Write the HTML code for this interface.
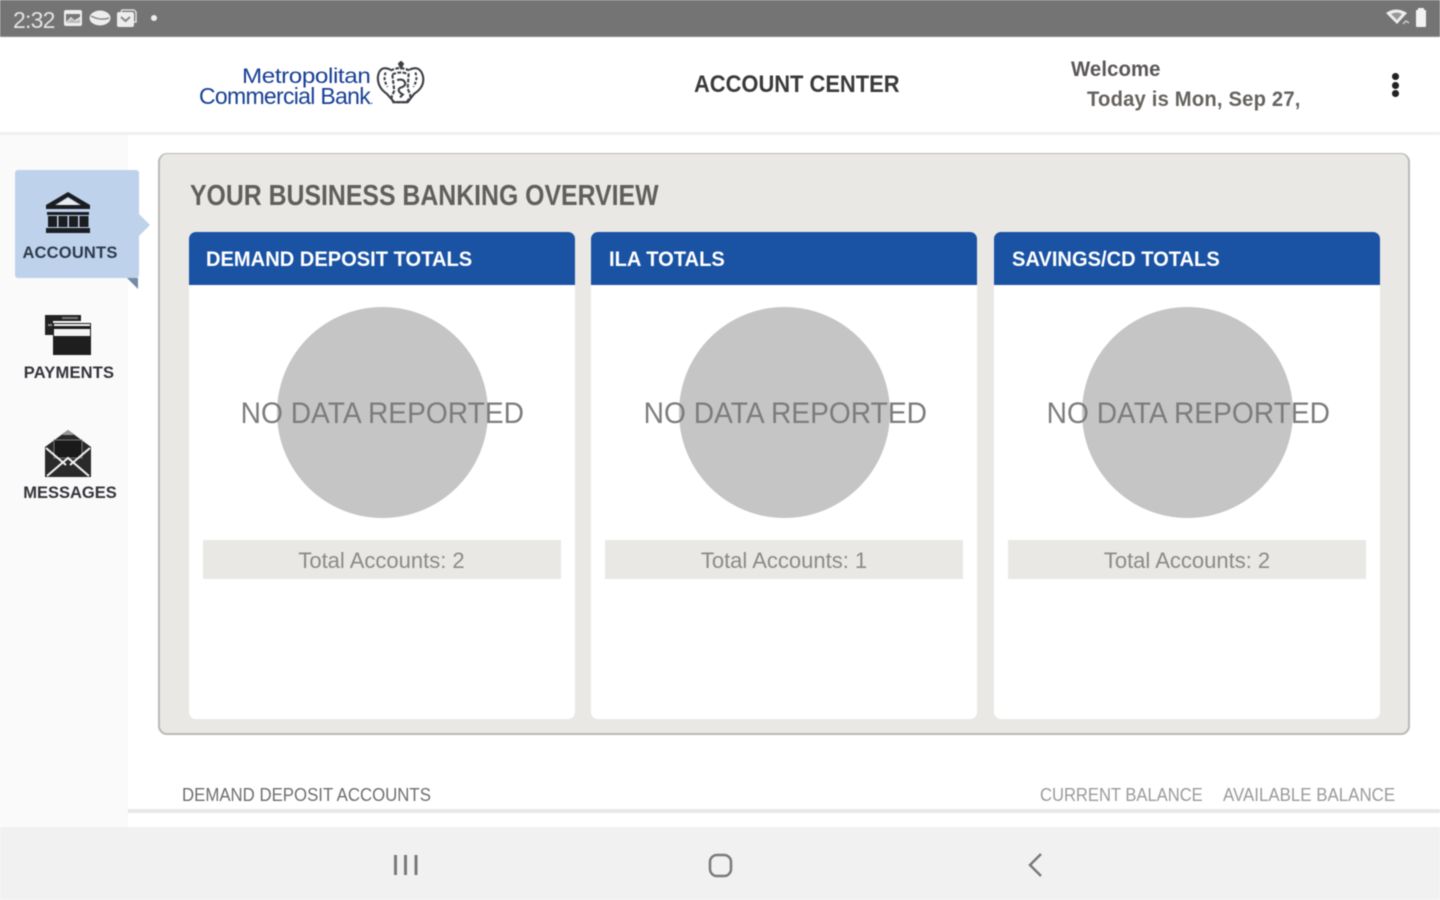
<!DOCTYPE html>
<html><head><meta charset="utf-8"><style>
*{box-sizing:border-box}
html,body{margin:0;padding:0}
body{width:1440px;height:900px;position:relative;overflow:hidden;background:#fff;font-family:"Liberation Sans",sans-serif;filter:blur(.6px)}
.a{position:absolute;white-space:nowrap}
.card{position:absolute;top:232px;width:386px;height:487px;background:#fff;border-radius:7px;overflow:hidden}
.hd{position:absolute;left:0;top:0;width:100%;height:53px;background:#1a53a3;color:#fff;font-weight:700;font-size:21.5px;line-height:54px;padding-left:17.5px}
.hd span{display:inline-block;transform:scaleX(.935);transform-origin:0 50%}
.cir{position:absolute;left:88px;top:75px;width:211px;height:211px;border-radius:50%;background:#c5c5c5}
.nd{position:absolute;left:0;width:100%;top:164px;text-align:center;font-size:29.5px;line-height:36px;color:#7c7c7c;white-space:nowrap}
.nd span{display:inline-block;transform:scaleX(.955) translateX(1px)}
.tot{position:absolute;left:14px;top:308px;width:358px;height:39px;background:#eae8e5;text-align:center;font-size:22px;line-height:41px;color:#8a8a8a}
.nav{font-weight:700;font-size:16.5px;color:#30343a;text-align:center;width:110px}
</style></head><body>
<div class="a" style="left:0;top:0;width:1440px;height:37px;background:#747474;border-bottom:1px solid #8a8a8a"></div>
<div class="a" style="left:13px;top:7px;font-size:23px;line-height:26px;color:#e4e4e4;letter-spacing:-.8px">2:32</div>
<svg class="a" style="left:62px;top:8px" width="100" height="21" viewBox="0 0 100 21">
<rect x="2" y="2" width="18" height="16" rx="2" fill="#ededed"/><path d="M4 14l5-5 4 3 5-3v-3H4z" fill="#777"/><path d="M4 15l6-5 4 3 4-2v4H4z" fill="#bbb"/>
<ellipse cx="38" cy="10" rx="10.500" ry="7.500" fill="#ededed"/><path d="M29 8q9 5 18 2" stroke="#888" fill="none" stroke-width="1.500"/>
<rect x="55" y="4" width="17" height="15" rx="2" fill="#ededed"/><path d="M59 4l1-2h12l2 2v10h-2" stroke="#ddd" fill="none" stroke-width="1.500"/><path d="M59 9l4.500 4 4.500-4" stroke="#888" fill="none" stroke-width="2"/>
<circle cx="92" cy="10" r="3" fill="#eee"/></svg>
<svg class="a" style="left:1384px;top:6px" width="50" height="24" viewBox="0 0 50 24">
<path d="M2 7q10-7 21 0l-10 11z" fill="#eee"/><path d="M7 8q6-3 11 0l-5 6z" fill="#999"/><path d="M19 18l3-3 3 2" stroke="#ccc" fill="none" stroke-width="1.500"/>
<path d="M32 4h2V2h6v2h2v16q0 1-1 1h-8q-1 0-1-1z" fill="#f2f2f2"/></svg>

<div class="a" style="left:0;top:37px;width:1440px;height:96px;background:#fff"></div>
<div class="a" style="left:0;top:132px;width:1440px;height:3px;background:#f0f0ef"></div>
<div class="a" style="left:242px;top:65px;font-size:21.500px;line-height:22px;color:#173f94;letter-spacing:-.35px;transform:scaleX(1.125);transform-origin:0 0">Metropolitan</div>
<div class="a" style="left:199px;top:85px;font-size:23px;line-height:23px;color:#173f94;letter-spacing:-.7px">Commercial Bank<span style="font-size:12px">.</span></div>
<svg class="a" style="left:374px;top:61px" width="52" height="46" viewBox="0 0 54 48" fill="none" stroke="#3c4045" stroke-width="2.200">
<path d="M17 9Q6 4 4 16q-1 11 9 18l8 9h14l7-9q11-7 9-18Q48 4 37 9"/><path d="M26 3l2-2 2 2-2 4z" fill="#45494d"/>
<path d="M17 10q10-5 20 0M19 14q9-4 17 0l-1 15q2 4 3 8l-4 6H20l-2-5 3-7z" stroke-dasharray="4 1.500"/><path d="M24 20q6-2 8 2t-5 6q-4 3 3 7l-3 3"/><path d="M12 12q-3 7 2 15M43 12q3 7-2 15" stroke-dasharray="3 2"/></svg>

<div class="a" style="left:694px;top:70px;font-size:24px;line-height:30px;font-weight:700;color:#3a3a3a;transform:scaleX(.912);transform-origin:0 0">ACCOUNT CENTER</div>
<div class="a" style="left:1071px;top:56px;font-size:21px;line-height:28px;font-weight:700;color:#5b5757;letter-spacing:.1px;transform:scaleX(.968);transform-origin:0 0">Welcome</div>
<div class="a" style="left:1087px;top:86px;font-size:21px;line-height:28px;font-weight:700;color:#66635f;letter-spacing:.2px;transform:scaleX(.962);transform-origin:0 0">Today is Mon, Sep 27,</div>
<div class="a" style="left:1392px;top:73px;width:6.500px;height:6.500px;border-radius:50%;background:#222"></div>
<div class="a" style="left:1392px;top:82px;width:6.500px;height:6.500px;border-radius:50%;background:#222"></div>
<div class="a" style="left:1392px;top:90px;width:6.500px;height:6.500px;border-radius:50%;background:#222"></div>

<div class="a" style="left:0;top:135px;width:128px;height:692px;background:#fafafa"></div>
<div class="a" style="left:15px;top:170px;width:124px;height:108px;background:#bed2ec;border-radius:3px"></div>
<div class="a" style="left:139px;top:214px;width:0;height:0;border-left:11px solid #bed2ec;border-top:11px solid transparent;border-bottom:11px solid transparent"></div>
<div class="a" style="left:127px;top:278px;width:0;height:0;border-right:11px solid #758aa6;border-bottom:11px solid transparent"></div>

<svg class="a" style="left:44px;top:191px" width="48" height="46" viewBox="0 0 48 46" fill="#1b1d20">
<path d="M24 1L2 14v4h44v-4zM24 6l13 8H11z" fill-rule="evenodd"/><path d="M24 7l11 7H13z" fill="#e9edf2"/>
<path d="M3 21h42v3H3zM4 25h9v11H4zM14.500 25h9v11h-9zM25 25h9v11h-9zM35.500 25h9v11h-9z"/><path d="M2 37h44v5H2z"/></svg>
<div class="a nav" style="left:15px;top:242.500px;line-height:20px;color:#2c3a4b;letter-spacing:.2px">ACCOUNTS</div>

<svg class="a" style="left:44px;top:313px" width="48" height="44" viewBox="0 0 48 44">
<path d="M1 2h36v6H9v14H1z" fill="#222"/><path d="M4 11h4v2H4z" fill="#888"/><path d="M18 4h16v2H18z" fill="#777"/>
<path d="M9 10h38v32H9z" fill="#1e1e1e"/><path d="M10 16h36v7H10zM10 11h36v2H10z" fill="#f4f4f4"/></svg>
<div class="a nav" style="left:14px;top:362.500px;line-height:20px;color:#33343a;letter-spacing:.2px">PAYMENTS</div>

<svg class="a" style="left:44px;top:429px" width="48" height="50" viewBox="0 0 48 50">
<path d="M24 1L1 18v30h46V18z" fill="#2a2a2a"/><path d="M10 11h28v18H10z" fill="#1a1a1a" stroke="#777" stroke-width="1"/><path d="M24 1L18 6h12z" fill="#999"/>
<path d="M2 19l20 17M46 19L26 36M3 47l21-18 21 18" stroke="#f2f2f2" stroke-width="2" fill="none"/></svg>
<div class="a nav" style="left:15px;top:482.500px;line-height:20px;color:#33343a">MESSAGES</div>

<div class="a" style="left:158px;top:153px;width:1252px;height:582px;background:#eae8e5;border:2px solid #bab9b6;border-radius:9px;border-top-width:1.500px"></div>
<div class="a" style="left:190px;top:179px;font-size:28.500px;line-height:34px;font-weight:700;color:#5f5f5d;transform:scaleX(.871);transform-origin:0 0">YOUR BUSINESS BANKING OVERVIEW</div>

<div class="card" style="left:188.500px"><div class="hd"><span>DEMAND DEPOSIT TOTALS</span></div><div class="cir"></div><div class="nd"><span>NO DATA REPORTED</span></div><div class="tot">Total Accounts: 2</div></div>
<div class="card" style="left:591px"><div class="hd"><span>ILA TOTALS</span></div><div class="cir"></div><div class="nd"><span>NO DATA REPORTED</span></div><div class="tot">Total Accounts: 1</div></div>
<div class="card" style="left:994px"><div class="hd"><span>SAVINGS/CD TOTALS</span></div><div class="cir"></div><div class="nd"><span>NO DATA REPORTED</span></div><div class="tot">Total Accounts: 2</div></div>

<div class="a" style="left:182px;top:784px;font-size:18.500px;line-height:22px;color:#6e6e6e;transform:scaleX(.908);transform-origin:0 0">DEMAND DEPOSIT ACCOUNTS</div>
<div class="a" style="left:1040px;top:784px;font-size:18.500px;line-height:22px;color:#9a9a9a;transform:scaleX(.896);transform-origin:0 0">CURRENT BALANCE</div>
<div class="a" style="left:1223px;top:784px;font-size:18.500px;line-height:22px;color:#9a9a9a;transform:scaleX(.913);transform-origin:0 0">AVAILABLE BALANCE</div>
<div class="a" style="left:128px;top:809px;width:1312px;height:4px;background:#e8e8e8"></div>

<div class="a" style="left:0;top:827px;width:1440px;height:73px;background:#f1f1f1"></div>
<svg class="a" style="left:390px;top:850px" width="670" height="30" viewBox="0 0 670 30" fill="none" stroke="#7a7a7a" stroke-width="3">
<path d="M5.500 5v20M15.500 5v20M26 5v20"/><rect x="320" y="5" width="21" height="21" rx="7" stroke-width="2.500"/><path d="M651 4l-11 11 11 11" stroke-width="2.500"/></svg>
</body></html>
